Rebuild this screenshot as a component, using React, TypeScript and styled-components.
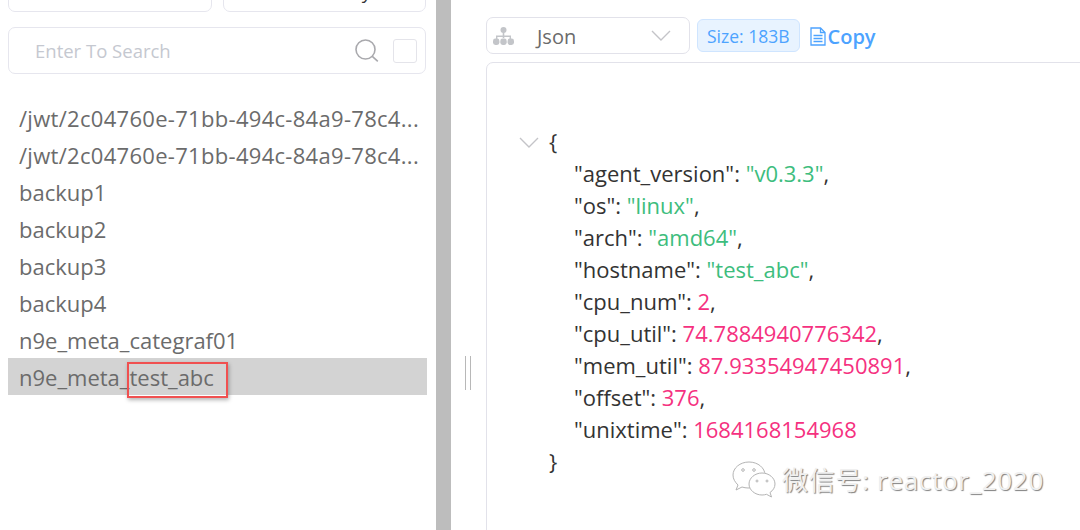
import React from "react";
import styled, { createGlobalStyle } from "styled-components";

const keys = [
    "/jwt/2c04760e-71bb-494c-84a9-78c4...",
    "/jwt/2c04760e-71bb-494c-84a9-78c4...",
    "backup1",
    "backup2",
    "backup3",
    "backup4",
    "n9e_meta_categraf01",
    "n9e_meta_test_abc",
];

const json: { key: string; value: string; kind: "str" | "num" }[] = [
    { key: "agent_version", value: '"v0.3.3"', kind: "str" },
    { key: "os", value: '"linux"', kind: "str" },
    { key: "arch", value: '"amd64"', kind: "str" },
    { key: "hostname", value: '"test_abc"', kind: "str" },
    { key: "cpu_num", value: "2", kind: "num" },
    { key: "cpu_util", value: "74.7884940776342", kind: "num" },
    { key: "mem_util", value: "87.93354947450891", kind: "num" },
    { key: "offset", value: "376", kind: "num" },
    { key: "unixtime", value: "1684168154968", kind: "num" },
];

const Chevron = ({ size = 20 }: { size?: number }) => (
    <svg width={size} height={size * 0.55} viewBox="0 0 20 11" fill="none" stroke="#c4c4c8" strokeWidth="1.4">
        <path d="M1 1l9 9 9-9" />
    </svg>
);

const App = () => {
    return (
        <Page>
            <GlobalStyle />
            <Sidebar>
                <ButtonRow>
                    <TopButton>&nbsp;</TopButton>
                    <TopButton>Delete Key</TopButton>
                </ButtonRow>
                <SearchBox>
                    <Placeholder>Enter To Search</Placeholder>
                    <svg width="24" height="24" viewBox="0 0 24 24" fill="none" stroke="#a9a9ad" strokeWidth="1.6">
                        <circle cx="10.500" cy="10.500" r="9.500" />
                        <path d="M17.300 17.300l5.500 5" />
                    </svg>
                    <CheckBox />
                </SearchBox>
                <KeyList>
                    {keys.map((key, i) => (
                        <KeyRow key={i} selected={i === keys.length - 1}>
                            <KeyText long={key.startsWith("/jwt")}>{key}</KeyText>
                            {i === keys.length - 1 && <Highlight />}
                        </KeyRow>
                    ))}
                </KeyList>
            </Sidebar>
            <Divider />
            <Handle>
                <Grip />
            </Handle>
            <Content>
                <Toolbar>
                    <FormatSelect>
                        <svg width="21" height="18" viewBox="0 0 21 18" fill="#c3c5c9">
                            <circle cx="10.500" cy="3" r="3" />
                            <rect x="9.700" y="5" width="1.600" height="6" />
                            <path d="M3 8.500h15V12h-1.400v-2.100H4.400V12H3z" />
                            <rect x="0" y="11.500" width="6.400" height="6.500" rx="2.400" />
                            <rect x="7.300" y="11.500" width="6.400" height="6.500" rx="2.400" />
                            <rect x="14.600" y="11.500" width="6.400" height="6.500" rx="2.400" />
                        </svg>
                        <FormatName>Json</FormatName>
                        <Chevron />
                    </FormatSelect>
                    <SizeTag>Size: 183B</SizeTag>
                    <CopyLink>
                        <svg width="16" height="19" viewBox="0 0 16 19" fill="none" stroke="#4da3ff" strokeWidth="1.3">
                            <path d="M1 1h9.500L15 5.500V18H1z" />
                            <path d="M10.500 1v4.500H15M3.500 8.500h9M3.500 11.500h9M3.500 14.500h9" />
                        </svg>
                        Copy
                    </CopyLink>
                </Toolbar>
                <Viewer>
                    <JsonLine>
                        <Fold>
                            <Chevron />
                        </Fold>
                        {"{"}
                    </JsonLine>
                    {json.map((row, i) => (
                        <JsonEntry key={row.key}>
                            "{row.key}": <JsonValue kind={row.kind}>{row.value}</JsonValue>
                            {i < json.length - 1 && ","}
                        </JsonEntry>
                    ))}
                    <JsonLine>{"}"}</JsonLine>
                </Viewer>
            </Content>
            <Watermark>
                <svg width="46" height="38" viewBox="0 0 46 38" fill="#fff" stroke="#b4b4b4" strokeWidth="1">
                    <path d="M18 1C9 1 2 7 2 14c0 4 2 7 5 10l-2 5 6-3c2 .6 4 1 6 1 9 0 17-6 17-13S27 1 18 1z" />
                    <path d="M31 12c-7 0-13 5-13 11s6 11 13 11c1.700 0 3-.2 4.500-.7l5 2.700-1.500-4.500c3-2 5-5 5-8.500 0-6-6-11-13-11z" />
                    <circle cx="12" cy="9" r="1.300" />
                    <circle cx="23" cy="9" r="1.300" />
                    <circle cx="26" cy="20" r="1" />
                    <circle cx="36" cy="20" r="1" />
                </svg>
                <WatermarkText>微信号: reactor_2020</WatermarkText>
            </Watermark>
        </Page>
    );
};

const GlobalStyle = createGlobalStyle`
    html, body {
        margin: 0;
        padding: 0;
        background: #fff;
        overflow: hidden;
    }
`;

const Page = styled.div`
    position: relative;
    display: grid;
    grid-template-columns: 436px 15px 35px 1fr;
    width: 1080px;
    height: 530px;
    overflow: hidden;
    font-family: "Open Sans", "Noto Sans", "Noto Sans CJK SC", sans-serif;
    color: #6b6b6b;
`;

const Sidebar = styled.div`
    display: flex;
    flex-direction: column;
    padding-left: 8px;
    padding-right: 9px;
`;

const ButtonRow = styled.div`
    display: flex;
    align-items: flex-end;
    gap: 11px;
    height: 12px;
    margin-right: 1px;
    overflow: hidden;
`;

const TopButton = styled.div`
    flex: 1;
    flex-shrink: 0;
    display: flex;
    align-items: center;
    justify-content: center;
    height: 40px;
    box-sizing: border-box;
    border: 1px solid #e6e6ee;
    border-radius: 7px;
    font-size: 19px;
    color: #333;
`;

const SearchBox = styled.div`
    display: flex;
    align-items: center;
    height: 47px;
    box-sizing: border-box;
    margin-top: 15px;
    margin-right: 1px;
    padding: 0 8px 0 26px;
    border: 1px solid #e6e6ee;
    border-radius: 7px;
`;

const Placeholder = styled.span`
    flex: 1;
    font-size: 18.500px;
    color: #c5c8d0;
`;

const CheckBox = styled.span`
    width: 24px;
    height: 24px;
    box-sizing: border-box;
    margin-left: 14px;
    border: 1px solid #e4e4ea;
    border-radius: 3px;
`;

const KeyList = styled.div`
    display: flex;
    flex-direction: column;
    margin-top: 25px;
`;

const KeyRow = styled.div<{ selected: boolean }>`
    position: relative;
    height: 37px;
    line-height: 38px;
    padding-left: 11px;
    padding-right: 4px;
    background: ${(props) => (props.selected ? "#d3d3d3" : "transparent")};
`;

const KeyText = styled.div<{ long: boolean }>`
    font-size: 22px;
    letter-spacing: ${(props) => (props.long ? "0.3px" : "0")};
    white-space: nowrap;
`;

const Highlight = styled.span`
    position: absolute;
    left: 119px;
    top: 4px;
    width: 101px;
    height: 36px;
    box-sizing: border-box;
    border: 2px solid #f05050;
    box-shadow: 1px 2px 4px rgba(0, 0, 0, 0.3);
`;

const Divider = styled.div`
    background: #bdbdbd;
`;

const Handle = styled.div`
    display: flex;
    justify-content: center;
    padding-top: 356px;
    padding-right: 1px;
`;

const Grip = styled.div`
    width: 6px;
    height: 34px;
    box-sizing: border-box;
    border-left: 1px solid #b8b8b8;
    border-right: 1px solid #b8b8b8;
`;

const Content = styled.div`
    display: flex;
    flex-direction: column;
    min-width: 0;
`;

const Toolbar = styled.div`
    display: flex;
    align-items: center;
    height: 37px;
    margin-top: 17px;
`;

const FormatSelect = styled.div`
    display: flex;
    align-items: center;
    width: 204px;
    height: 37px;
    box-sizing: border-box;
    padding: 0 18px 0 6px;
    border: 1px solid #e2e2ea;
    border-radius: 7px;
`;

const FormatName = styled.span`
    flex: 1;
    margin-left: 23px;
    font-size: 20px;
    line-height: 37px;
    padding-top: 1px;
`;

const SizeTag = styled.span`
    display: flex;
    align-items: center;
    height: 33px;
    box-sizing: border-box;
    margin-left: 7px;
    padding: 1px 9px 0;
    border: 1px solid #cfe5ff;
    border-radius: 6px;
    background: #e8f3ff;
    color: #4da3ff;
    font-size: 17.500px;
`;

const CopyLink = styled.span`
    display: flex;
    align-items: center;
    gap: 2px;
    margin-left: 10px;
    padding-top: 2px;
    color: #4da3ff;
    font-size: 20px;
    font-weight: 600;
`;

const Viewer = styled.div`
    flex: 1;
    margin-top: 8px;
    margin-right: -20px;
    margin-bottom: -20px;
    padding-top: 62px;
    padding-left: 62px;
    border: 1px solid #e2e2ea;
    border-radius: 7px;
    font-size: 22px;
    color: #333;
`;

const JsonLine = styled.div`
    position: relative;
    height: 32px;
    line-height: 32px;
`;

const JsonEntry = styled(JsonLine)`
    padding-left: 25px;
`;

const Fold = styled.span`
    position: absolute;
    left: -30px;
    top: -2px;
`;

const JsonValue = styled.span<{ kind: "str" | "num" }>`
    color: ${(props) => (props.kind === "str" ? "#3dbd7d" : "#f5317f")};
`;

const Watermark = styled.div`
    position: absolute;
    left: 731px;
    top: 461px;
    display: flex;
    align-items: center;
    gap: 5px;
`;

const WatermarkText = styled.span`
    font-size: 26px;
    line-height: 38px;
    letter-spacing: 0.700px;
    color: #f0f0f0;
    text-shadow: 1px 1px 1px #808080;
    white-space: nowrap;
`;

export default App;
